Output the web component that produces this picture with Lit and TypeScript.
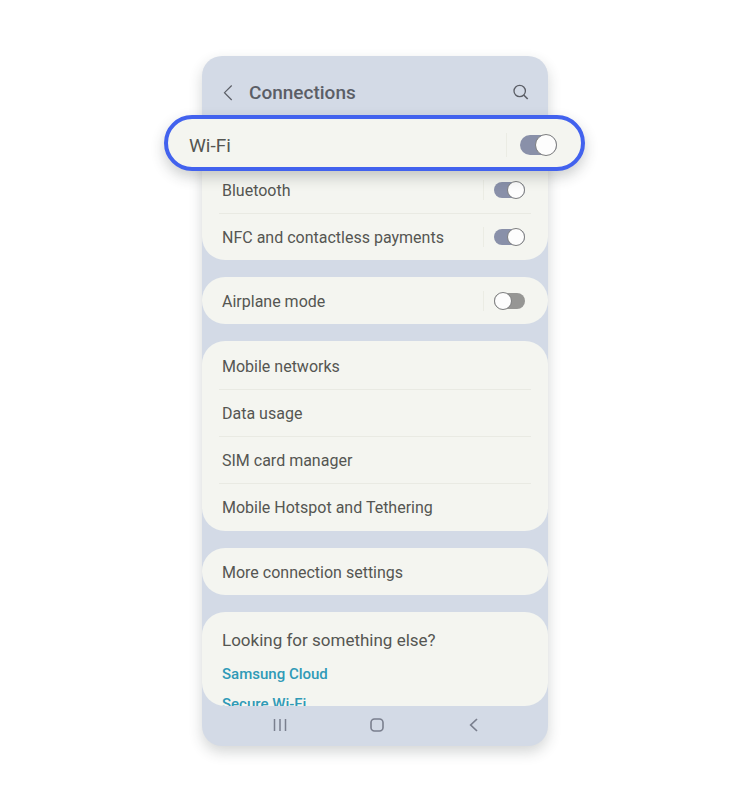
import { LitElement, html, css, svg } from "lit";
import { customElement, property } from "lit/decorators.js";

@customElement("setting-switch")
class SettingSwitch extends LitElement {
  @property() label = "";
  @property({ type: Boolean }) on = false;
  @property({ type: Boolean, reflect: true }) large = false;

  static styles = css`
    :host {
      --track-w: 31px;
      --track-h: 16px;
      --knob: 18px;
      display: flex;
      align-items: center;
      border-left: 1px solid #ebece4;
      padding-left: 10px;
      height: 20px;
    }
    :host([large]) {
      --track-w: 37px;
      --track-h: 20px;
      --knob: 22px;
      padding-left: 13px;
      height: 24px;
    }
    input {
      appearance: none;
      display: flex;
      align-items: center;
      justify-content: flex-start;
      box-sizing: border-box;
      width: var(--track-w);
      height: var(--track-h);
      margin: 0;
      border-radius: 10px;
      background: #969694;
      cursor: pointer;
    }
    input::before {
      content: "";
      flex: none;
      box-sizing: border-box;
      width: var(--knob);
      height: var(--knob);
      border: 1px solid #7d7e7f;
      border-radius: 50%;
      background: #fdfdfd;
    }
    input:checked {
      background: #8990a9;
      justify-content: flex-end;
    }
  `;

  render() {
    return html`<input type="checkbox" role="switch" aria-label=${this.label} .checked=${this.on} />`;
  }
}

interface Item {
  label: string;
  on?: boolean;
}

const radios: Item[] = [
  { label: "Bluetooth", on: true },
  { label: "NFC and contactless payments", on: true },
];
const airplane: Item[] = [{ label: "Airplane mode", on: false }];
const networks: Item[] = [
  { label: "Mobile networks" },
  { label: "Data usage" },
  { label: "SIM card manager" },
  { label: "Mobile Hotspot and Tethering" },
];
const more: Item[] = [{ label: "More connection settings" }];

const icon = (w: number, h: number, body: unknown) =>
  html`<svg width=${w} height=${h} viewBox="0 0 ${w} ${h}" fill="none" aria-hidden="true">${body}</svg>`;

@customElement("app-root")
class AppRoot extends LitElement {
  static styles = css`
    :host {
      display: block;
      box-sizing: border-box;
      min-height: 100vh;
      padding: 56px 48px 54px;
      background: #fff;
      color: #555652;
      font-family: Roboto, "Liberation Sans", sans-serif;
      font-size: 16px;
      line-height: 20px;
    }
    * {
      box-sizing: border-box;
    }
    .phone {
      display: flex;
      flex-direction: column;
      max-width: 346px;
      margin: 0 auto;
      border-radius: 20px;
      background: #d3dae6;
      box-shadow: 0 6px 14px rgba(40, 50, 50, 0.2);
    }
    button {
      display: flex;
      align-items: center;
      justify-content: center;
      margin: 0;
      padding: 0;
      border: 0;
      background: none;
      color: inherit;
      font: inherit;
      cursor: pointer;
    }
    svg {
      display: block;
    }
    header {
      display: flex;
      align-items: center;
      padding: 24px 17px 9px 16px;
      color: #5b5e66;
    }
    header button {
      width: 20px;
      height: 24px;
    }
    h1 {
      flex: 1;
      margin: 0 0 0 11px;
      font-size: 19px;
      line-height: 26px;
      font-weight: 500;
    }
    .highlight {
      position: relative;
      z-index: 1;
      display: flex;
      align-items: center;
      justify-content: space-between;
      height: 56px;
      margin: 0 -37px -5px -38px;
      padding: 4px 24px 0 21px;
      border: 4px solid #4262ee;
      border-radius: 28px;
      background: #f4f5f0;
      box-shadow: 0 6px 14px rgba(40, 50, 50, 0.24);
      font-size: 19px;
      line-height: 24px;
    }
    .groups {
      display: flex;
      flex-direction: column;
      gap: 17px;
    }
    .card {
      margin: 0;
      padding: 0 17px;
      border-radius: 23px;
      background: #f4f5f0;
      list-style: none;
    }
    .card.joined {
      border-radius: 0 0 23px 23px;
    }
    .card.list {
      padding: 1px 17px;
    }
    .row {
      display: flex;
      align-items: center;
      justify-content: space-between;
      min-height: 47px;
      padding: 0 6px 0 3px;
    }
    .row + .row {
      border-top: 1px solid #e9eae3;
    }
    .row span,
    .row button,
    .highlight span {
      padding-top: 2px;
    }
    .row button {
      flex: 1;
      justify-content: flex-start;
      min-height: 46px;
    }
    .suggest {
      height: 94px;
      padding: 18px 20px 0;
      overflow: hidden;
    }
    h2 {
      margin: 0 0 14px;
      font-size: 17px;
      line-height: 20px;
      font-weight: 400;
    }
    a {
      display: block;
      margin-bottom: 10px;
      color: #2f9ab7;
      font-size: 15px;
      line-height: 20px;
      font-weight: 500;
      text-decoration: none;
    }
    nav {
      display: grid;
      grid-template-columns: repeat(3, 1fr);
      height: 40px;
      padding: 0 26px 2px 30px;
      color: #7a7f8e;
    }
  `;

  private card(items: Item[], extra = "") {
    return html`<ul class="card ${extra}">
      ${items.map(
        (i) => html`<li class="row">
          ${i.on === undefined
            ? html`<button>${i.label}</button>`
            : html`<span>${i.label}</span><setting-switch .label=${i.label} .on=${i.on}></setting-switch>`}
        </li>`,
      )}
    </ul>`;
  }

  render() {
    return html`
      <main class="phone">
        <header>
          <button aria-label="Back">
            ${icon(20, 20, svg`<path d="M13.700 2.500L6.500 9.700L13.700 17" stroke="currentColor" stroke-width="1.200"/>`)}
          </button>
          <h1>Connections</h1>
          <button aria-label="Search">
            ${icon(
              20,
              20,
              svg`<circle cx="8.700" cy="8" r="5.700" stroke="currentColor" stroke-width="1.300"/><path d="M12.700 12L16.700 16" stroke="currentColor" stroke-width="1.600"/>`,
            )}
          </button>
        </header>
        <section class="highlight">
          <span>Wi-Fi</span>
          <setting-switch large .label=${"Wi-Fi"} .on=${true}></setting-switch>
        </section>
        <div class="groups">
          ${this.card(radios, "joined")} ${this.card(airplane)} ${this.card(networks, "list")} ${this.card(more)}
          <section class="card suggest">
            <h2>Looking for something else?</h2>
            <a href="#cloud">Samsung Cloud</a>
            <a href="#secure-wifi">Secure Wi-Fi</a>
          </section>
        </div>
        <nav aria-label="System">
          <button aria-label="Recent apps">
            ${icon(14, 14, svg`<path d="M1.500 1V13M7 1V13M12.500 1V13" stroke="currentColor" stroke-width="1.500"/>`)}
          </button>
          <button aria-label="Home">
            ${icon(14, 14, svg`<rect x="1" y="1" width="12" height="12" rx="3.500" stroke="currentColor" stroke-width="1.600"/>`)}
          </button>
          <button aria-label="Previous screen">
            ${icon(14, 14, svg`<path d="M10 1L3.700 7L10 13" stroke="currentColor" stroke-width="1.700"/>`)}
          </button>
        </nav>
      </main>
    `;
  }
}
